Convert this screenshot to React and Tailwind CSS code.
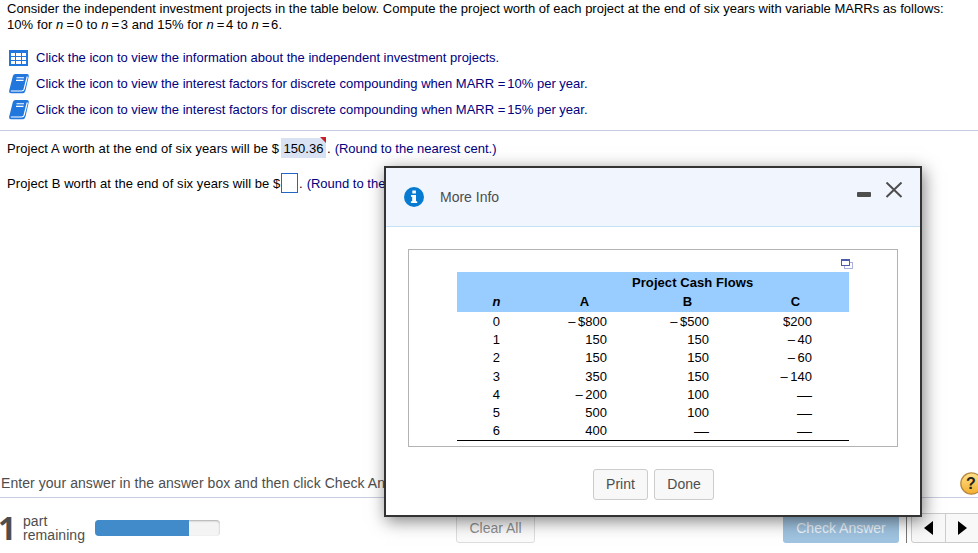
import React from "react";

const rows = [
  ["0", "–\u2009$800", "–\u2009$500", "$200"],
  ["1", "150", "150", "–\u200940"],
  ["2", "150", "150", "–\u200960"],
  ["3", "350", "150", "–\u2009140"],
  ["4", "–\u2009200", "100", "—"],
  ["5", "500", "100", "—"],
  ["6", "400", "—", "—"],
];

function TableIcon() {
  return (
    <svg width="20" height="18" viewBox="0 0 20 18" shapeRendering="crispEdges">
      <rect x="0" y="1" width="19" height="16" rx="1" fill="#2277dd" />
      {[4, 8, 12].map((y) =>
        [2, 7, 13].map((x) => (
          <rect key={x + "-" + y} x={x} y={y} width={x === 7 ? 5 : 4} height="3" fill="#fff" />
        ))
      )}
    </svg>
  );
}

function BookIcon() {
  return (
    <svg width="21" height="20" viewBox="0 0 21 20">
      <path d="M6.5 0H18q2 0 1.800 2l-3.300 14.500q-.6 2.800-3 2.800H2.500Q-.4 19.300 .2 16.500L3.800 2.300Q4.300 0 6.500 0z" fill="#2277dd" />
      <path d="M1.800 17h10.800q2 0 2.500-1.800L18.300 2.500" fill="none" stroke="#fff" strokeWidth="1.200" />
      <path d="M7.500 3.700h7.500M7 6.400h7.500" stroke="#fff" strokeWidth="1.100" />
    </svg>
  );
}

function Eq() {
  return <span className="ml-[3px] mr-[1.500px]">=</span>;
}

function InfoLink({ icon, children }) {
  return (
    <div className="flex h-[26px] items-center">
      <span className="flex w-[27px] shrink-0">{icon}</span>
      <span className="text-[#000080]">{children}</span>
    </div>
  );
}

function Amount({ className, value }) {
  const dash = value === "—";
  return <span className={className + (dash ? " text-[15px]" : "")}>{value}</span>;
}

function Dialog() {
  return (
    <section className="absolute left-[384px] top-[166px] flex h-[351px] w-[538px] flex-col border-2 border-[#333] bg-white shadow-[2px_4px_16px_rgba(0,0,0,0.5)]">
      <header className="flex h-[59px] shrink-0 border-b border-[#c5e1f5] bg-[#f1f6fe] pl-[18px] pr-[17px] text-[14px] text-[#4d4d4d]">
        <svg className="mt-[19px]" width="20" height="20" viewBox="0 0 20 20">
          <circle cx="10" cy="10" r="10" fill="#067bd1" />
          <path d="M8.300 3.500h3.600v3H8.300zM7 8h5v6.200h1.200V16H6.900v-1.800h1.300V9.800H7z" fill="#fff" />
        </svg>
        <span className="ml-4 mt-[19px] leading-5">More Info</span>
        <span className="flex-1" />
        <svg className="mt-[24px]" width="15" height="6" viewBox="0 0 15 6">
          <rect x="1" width="14" height="5" rx="1" y="0" fill="#4d4d4d" />
        </svg>
        <svg className="ml-[14px] mt-[14px]" width="18" height="16" viewBox="0 0 18 16">
          <path d="M1.500 .5L16.500 15M16.500 .5L1.500 15" stroke="#4d4d4d" strokeWidth="2" />
        </svg>
      </header>
      <div className="ml-[22px] mt-[22px] h-[198px] w-[490px] shrink-0 border border-[#b3b3b3] pl-12 pt-[22px] text-[13px] text-black">
        <div className="relative h-[169px] w-[392px] border-b border-black">
          <svg className="absolute right-[-4px] top-[-13px]" width="12" height="10" viewBox="0 0 12 10" shapeRendering="crispEdges">
            <path d="M3.500 3.500h8v6h-8z" fill="#fff" stroke="#aab0dc" />
            <path d="M.5 .5h8v6h-8z" fill="#fff" stroke="#4d5ca8" />
            <path d="M0 1h9" stroke="#4d5ca8" strokeWidth="2" />
          </svg>
          <div className="h-10 bg-[#99ccff] font-bold">
            <div className="h-5 pl-[175px] leading-[21px] tracking-[0.07px]">Project Cash Flows</div>
            <div className="flex h-5 leading-[20px]">
              <i className="w-[79px] text-center">n</i>
              <span className="w-[97px] text-center">A</span>
              <span className="w-[109px] text-center">B</span>
              <span className="w-[107px] text-center">C</span>
            </div>
          </div>
          {rows.map((row) => (
            <div key={row[0]} className="flex h-[18.200px] leading-[20px]">
              <span className="w-[43px] text-right">{row[0]}</span>
              <Amount className="w-[107px] text-right" value={row[1]} />
              <Amount className="w-[102px] text-right" value={row[2]} />
              <Amount className="w-[103px] text-right" value={row[3]} />
            </div>
          ))}
        </div>
      </div>
      <div className="mt-[22px] flex justify-center gap-[6px] pl-[1px] text-[14px] text-[#4d4d4d]">
        <button className="h-[31px] w-[55px] rounded-[3px] border border-[#ccc] bg-[#f8f8f8]">Print</button>
        <button className="h-[31px] w-[60px] rounded-[3px] border border-[#ccc] bg-[#f8f8f8]">Done</button>
      </div>
    </section>
  );
}

export default function App() {
  return (
    <div className="relative flex h-[553px] w-[978px] flex-col overflow-hidden bg-white font-['Liberation_Sans',Arial,sans-serif] text-[13px] text-black">
      <main className="flex h-[472px] shrink-0 flex-col whitespace-nowrap">
        <div className="h-[44px] pl-[7px] pt-px leading-4">
          <p>Consider the independent investment projects in the table below. Compute the project worth of each project at the end of six years with variable MARRs as follows:</p>
          <p className="tracking-[0.080px]">10% for <i>n</i><Eq />0 to <i>n</i><Eq />3 and 15% for <i>n</i><Eq />4 to <i>n</i><Eq />6.</p>
        </div>
        <div className="h-[86px] pl-[9px] pt-[1px]">
          <InfoLink icon={<TableIcon />}>Click the icon to view the information about the independent investment projects.</InfoLink>
          <InfoLink icon={<BookIcon />}>Click the icon to view the interest factors for discrete compounding when MARR =<span className="ml-[2px]">10% per year.</span></InfoLink>
          <InfoLink icon={<BookIcon />}>Click the icon to view the interest factors for discrete compounding when MARR =<span className="ml-[2px]">15% per year.</span></InfoLink>
        </div>
        <div className="border-t border-[#c8cce0] pl-[7px] pt-[7px]">
          <div className="flex h-5 items-center">
            <span className="w-[274px] pt-[2px] tracking-[0.080px]">Project A worth at the end of six years will be $</span>
            <span className="relative h-5 w-[45px] bg-[#d9e2f3] text-center leading-[21px]">
              150.36
              <svg className="absolute -top-px right-0" width="6" height="6"><path d="M0 0h6v6z" fill="#c8202a" /></svg>
            </span>
            <span className="pl-[1px] pt-[2px]">.</span>
            <span className="pl-1 pt-[2px] text-[#000080]">(Round to the nearest cent.)</span>
          </div>
          <div className="mt-[15px] flex h-5 items-center">
            <span className="w-[274px] pt-[2px] tracking-[0.080px]">Project B worth at the end of six years will be $</span>
            <span className="h-5 w-[17px] border border-[#2366c4]" />
            <span className="pl-[1px] pt-[2px]">.</span>
            <span className="pl-1 pt-[2px] text-[#000080]">(Round to the nearest cent.)</span>
          </div>
        </div>
      </main>
      <div className="flex h-[26px] shrink-0 items-center justify-between border-b border-[#c8cce0] pl-[1px] text-[14px] text-[#4d4d4d]">
        <span className="pb-[2px] tracking-[0.060px]">Enter your answer in the answer box and then click Check Answer.</span>
        <svg className="-mr-[5px] -mt-[2px] shrink-0" width="23" height="24" viewBox="0 0 23 24">
          <defs><linearGradient id="help" x2="0" y2="1"><stop stopColor="#ffe28b" /><stop offset="1" stopColor="#f4ae2e" /></linearGradient></defs>
          <circle cx="11.500" cy="11.500" r="10.700" fill="url(#help)" stroke="#b78a42" strokeWidth="1.300" />
          <text x="11" y="17" textAnchor="middle" fontSize="16" fontWeight="700" fill="#222">?</text>
        </svg>
      </div>
      <footer className="flex h-[55px] shrink-0 text-[14px] text-[#4d4d4d]">
        <span className="mt-[14px] w-[23px] shrink-0 font-['Open_Sans'] text-[32px] font-bold leading-8 -indent-[2px]">1</span>
        <span className="mt-[16px] w-[72px] shrink-0 leading-[14px] tracking-[0.060px]">part<br />remaining</span>
        <div className="mt-[22px] h-4 w-[125px] shrink-0 overflow-hidden rounded-[4px] bg-[#f4f4f4] shadow-[inset_0_1px_2px_rgba(0,0,0,0.3)]">
          <div className="h-4 w-[94px] bg-[#428bca]" />
        </div>
        <button className="ml-[236px] mt-[15px] h-[30px] w-[79px] shrink-0 rounded-[3px] border border-[#ddd] bg-[#fbfbfb] text-[#8e8e8e]">Clear All</button>
        <button className="ml-[248px] mt-[15px] h-[30px] w-[116px] shrink-0 rounded-[3px] bg-[#9fc3e0] text-[#eef5fb]">Check Answer</button>
        <div className="ml-[7px] mt-[15px] h-[30px] w-px shrink-0 bg-[#777]" />
        <div className="ml-1 mt-[15px] flex h-[30px] w-[80px] shrink-0 rounded-[3px] border border-[#ccc] bg-[#f8f8f8]">
          <span className="flex w-[34px] items-center justify-center border-r border-[#ccc] text-black"><svg width="9" height="14"><path d="M9 0v14L0 7z" /></svg></span>
          <span className="flex w-[33px] items-center justify-center text-black"><svg width="9" height="14"><path d="M0 0v14l9-7z" /></svg></span>
        </div>
      </footer>
      <Dialog />
    </div>
  );
}
